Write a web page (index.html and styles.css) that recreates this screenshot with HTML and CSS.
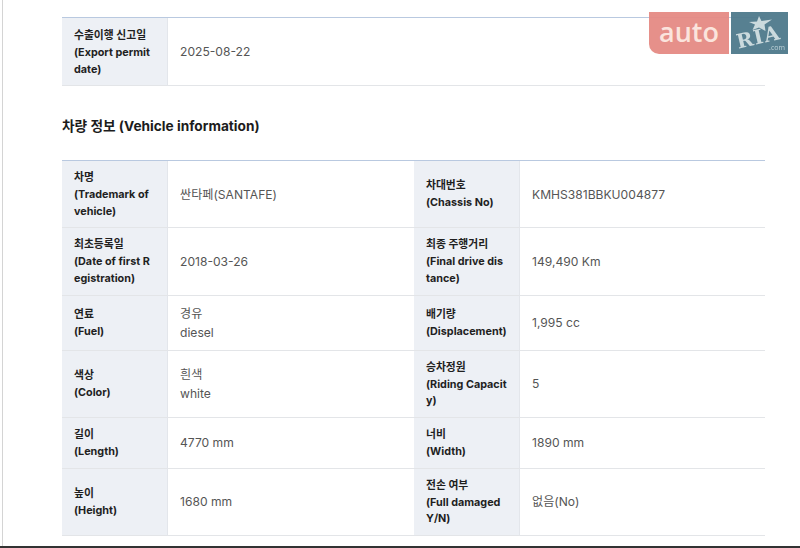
FILE: index.html
```html
<!DOCTYPE html>
<html lang="ko">
<head>
<meta charset="utf-8">
<title>Vehicle information</title>
<link rel="stylesheet" href="styles.css">
</head>
<body>
<div class="page">
  <main class="sheet">
    <table class="info first">
      <colgroup><col class="c-th"><col></colgroup>
      <tr><th>수출이행 신고일<br>(Export permit date)</th><td>2025-08-22</td></tr>
    </table>
    <h2 class="title">차량 정보 (Vehicle information)</h2>
    <table class="info">
      <colgroup><col class="c-th"><col class="c-td"><col class="c-th"><col></colgroup>
      <tr><th>차명<br>(Trademark of vehicle)</th><td>싼타페(SANTAFE)</td><th>차대번호<br>(Chassis No)</th><td>KMHS381BBKU004877</td></tr>
      <tr><th>최초등록일<br>(Date of first R<br>egistration)</th><td>2018-03-26</td><th>최종 주행거리<br>(Final drive dis<br>tance)</th><td>149,490 Km</td></tr>
      <tr><th>연료<br>(Fuel)</th><td>경유<br>diesel</td><th>배기량<br>(Displacement)</th><td>1,995 cc</td></tr>
      <tr><th>색상<br>(Color)</th><td>흰색<br>white</td><th>승차정원<br>(Riding Capacit<br>y)</th><td>5</td></tr>
      <tr><th>길이<br>(Length)</th><td>4770 mm</td><th>너비<br>(Width)</th><td>1890 mm</td></tr>
      <tr><th>높이<br>(Height)</th><td>1680 mm</td><th>전손 여부<br>(Full damaged<br>Y/N)</th><td>없음(No)</td></tr>
    </table>
  </main>
  <div class="logo">
    <div class="logo-auto">auto</div>
    <div class="logo-ria">
      <svg class="logo-star" viewBox="0 0 24 16" width="24" height="16"><path d="M11 0l2.500 5 10.500-1.500-7.500 5 1 6.500-6.500-3.500-6.500 2.500 2.500-5.500-6-2.500 8-.5z" fill="#c9d8dc"/></svg>
      <span class="ria-word">RIA</span>
      <span class="ria-com">.com</span>
    </div>
  </div>
</div>
</body>
</html>
```
FILE: styles.css
```css
* { box-sizing: border-box; }
html, body { margin: 0; padding: 0; background: #fff; }
body {
  width: 800px;
  height: 548px;
  overflow: hidden;
  font-family: Inter, "Noto Sans CJK KR", sans-serif;
}
.page {
  position: relative;
  width: 800px;
  height: 548px;
  border-bottom: 2px solid #333;
  overflow: hidden;
}
.page::before {
  content: "";
  position: absolute;
  left: 2px;
  top: 0;
  bottom: 0;
  width: 1px;
  background: #d4d4d4;
}
.sheet {
  padding: 17px 35px 0 62px;
}
.info {
  width: 703px;
  table-layout: fixed;
  border-collapse: separate;
  border-spacing: 0;
  border-top: 1px solid #b9c9e0;
}
.c-th { width: 106px; }
.c-td { width: 246px; }
.info th, .info td {
  border-bottom: 1px solid #e3e5e8;
  vertical-align: middle;
}
.info th {
  padding: 9px 6px 7px 12px;
  background: #edf0f5;
  border-right: 1px solid #e3e6eb;
  color: #1f1f1f;
  font-size: 10.8px;
  line-height: 16.8px;
  font-weight: 700;
  text-align: left;
}
.first th {
  line-height: 17px;
}
.info td {
  padding: 8px 12px;
  color: #555;
  font-size: 12.1px;
  line-height: 19px;
}
.title {
  margin: 30px 0 24px;
  color: #1c1c1c;
  font-size: 13.7px;
  line-height: 20px;
  font-weight: 700;
}
.logo {
  position: absolute;
  left: 649px;
  top: 12px;
  display: flex;
  gap: 2px;
  height: 42px;
  opacity: .95;
}
.logo-auto {
  width: 80px;
  padding-bottom: 2px;
  background: #e58b84;
  border-bottom-left-radius: 10px;
  color: #fbe3dc;
  font-family: "Open Sans", sans-serif;
  font-size: 27px;
  font-weight: 600;
  line-height: 40px;
  text-align: center;
}
.logo-ria {
  position: relative;
  width: 57px;
  background: #4f7a8c;
}
.logo-star {
  position: absolute;
  left: 17px;
  top: 4px;
}
.ria-word {
  position: absolute;
  left: 5px;
  top: 13px;
  color: #c9d8dc;
  font-family: "DejaVu Serif", serif;
  font-size: 20px;
  line-height: 24px;
  font-weight: 700;
  letter-spacing: 1px;
  transform: rotate(-13deg);
}
.ria-com {
  position: absolute;
  right: 3px;
  bottom: 2px;
  color: #bcd0d6;
  font-family: "Open Sans", sans-serif;
  font-size: 7px;
  line-height: 9px;
}
```
